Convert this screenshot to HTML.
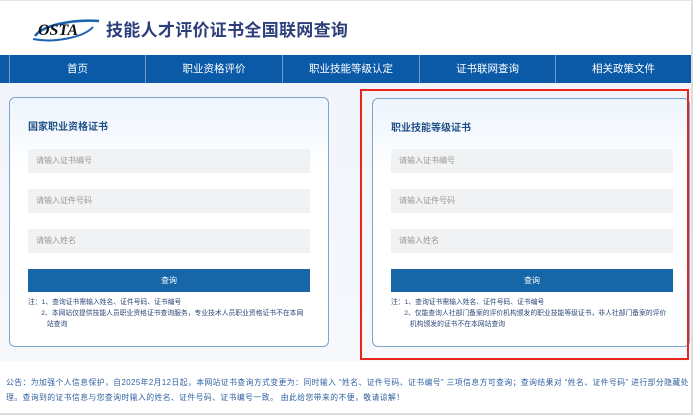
<!DOCTYPE html>
<html><head><meta charset="utf-8"><style>
*{margin:0;padding:0;box-sizing:border-box}
body{width:693px;height:415px;overflow:hidden;background:#fff;font-family:"Liberation Sans","Noto Sans CJK SC",sans-serif;position:relative;border-right:2px solid #ddd;border-top:1px solid #e4e4e4;border-bottom:2px solid #ddd}
.hd{position:absolute;left:0;top:0;width:691px;height:54px;background:#fff}
.logo{position:absolute;left:31px;top:13px}
.ttl{position:absolute;left:106px;top:15px;font-size:17px;font-weight:bold;color:#2d3f7a;letter-spacing:0.3px}
.nav{position:absolute;left:0;top:54px;width:691px;height:28px;background:#0b5aa8}
.nav div{position:absolute;top:0;height:28px;line-height:28px;text-align:center;color:#fff;font-size:10.5px;border-left:1px solid #6d9bd0}
.bg{position:absolute;left:0;top:82px;width:691px;height:278px;background:linear-gradient(180deg,#f1f5fb,#f6f8fc)}
.card{position:absolute;border:1px solid #7fa5c8;border-radius:6px;background:linear-gradient(180deg,#eef5fd 0,#fff 30%)}
.card h3{position:absolute;left:18px;top:20px;font-size:10px;color:#1f4f87;font-weight:bold}
.in{position:absolute;left:18px;height:24px;background:#f1f2f4;font-size:8px;color:#999;line-height:24px;padding-left:8px}
.btn{position:absolute;left:18px;height:23px;background:#1766a8;color:#fff;font-size:8px;text-align:center;line-height:23px}
.nt{position:absolute;left:18px;font-size:6.8px;color:#2e4a7a;line-height:11px;white-space:nowrap}
.red{position:absolute;left:360px;top:88px;width:329px;height:271px;border:2px solid #e8261b}
.notice{position:absolute;left:6px;top:374px;font-size:7.8px;color:#3060a0;line-height:15px;width:684px;letter-spacing:0.45px}
</style></head><body>
<div class="hd">
<svg class="logo" width="72" height="28" viewBox="0 0 72 28"><path d="M4 22 C12 11,42 5,68 7" stroke="#1b63b0" stroke-width="2.5" fill="none"/><path d="M2 25 C22 29,52 24,62 13" stroke="#1b63b0" stroke-width="2" fill="none"/><text x="7" y="21" font-family="Liberation Serif" font-style="italic" font-weight="bold" font-size="16" fill="#111">OSTA</text></svg>
<div class="ttl">技能人才评价证书全国联网查询</div>
</div>
<div class="nav">
<div style="left:9px;width:136px">首页</div>
<div style="left:145px;width:137px">职业资格评价</div>
<div style="left:282px;width:137px">职业技能等级认定</div>
<div style="left:419px;width:136px">证书联网查询</div>
<div style="left:555px;width:136px">相关政策文件</div>
</div>
<div class="bg"></div>
<div class="card" style="left:9px;top:96px;width:320px;height:250px">
<h3>国家职业资格证书</h3>
<div class="in" style="top:51px;width:282px">请输入证书编号</div>
<div class="in" style="top:91px;width:282px">请输入证件号码</div>
<div class="in" style="top:131px;width:282px">请输入姓名</div>
<div class="btn" style="top:171px;width:282px">查询</div>
<div class="nt" style="top:199px">注：1、查询证书需输入姓名、证件号码、证书编号<br>&nbsp;&nbsp;&nbsp;&nbsp;&nbsp;&nbsp;&nbsp;2、本网站仅提供技能人员职业资格证书查询服务，专业技术人员职业资格证书不在本网<br>&nbsp;&nbsp;&nbsp;&nbsp;&nbsp;&nbsp;&nbsp;&nbsp;&nbsp;&nbsp;站查询</div>
</div>
<div class="card" style="left:372px;top:97px;width:318px;height:249px">
<h3>职业技能等级证书</h3>
<div class="in" style="top:50px;width:282px">请输入证书编号</div>
<div class="in" style="top:90px;width:282px">请输入证件号码</div>
<div class="in" style="top:130px;width:282px">请输入姓名</div>
<div class="btn" style="top:170px;width:282px">查询</div>
<div class="nt" style="top:198px">注：1、查询证书需输入姓名、证件号码、证书编号<br>&nbsp;&nbsp;&nbsp;&nbsp;&nbsp;&nbsp;&nbsp;2、仅能查询人社部门备案的评价机构颁发的职业技能等级证书，非人社部门备案的评价<br>&nbsp;&nbsp;&nbsp;&nbsp;&nbsp;&nbsp;&nbsp;&nbsp;&nbsp;&nbsp;机构颁发的证书不在本网站查询</div>
</div>
<div class="red"></div>
<div class="notice">公告：为加强个人信息保护，自2025年2月12日起，本网站证书查询方式变更为：同时输入 “姓名、证件号码、证书编号” 三项信息方可查询；查询结果对 “姓名、证件号码” 进行部分隐藏处理。查询到的证书信息与您查询时输入的姓名、证件号码、证书编号一致。 由此给您带来的不便，敬请谅解！</div>
</body></html>
